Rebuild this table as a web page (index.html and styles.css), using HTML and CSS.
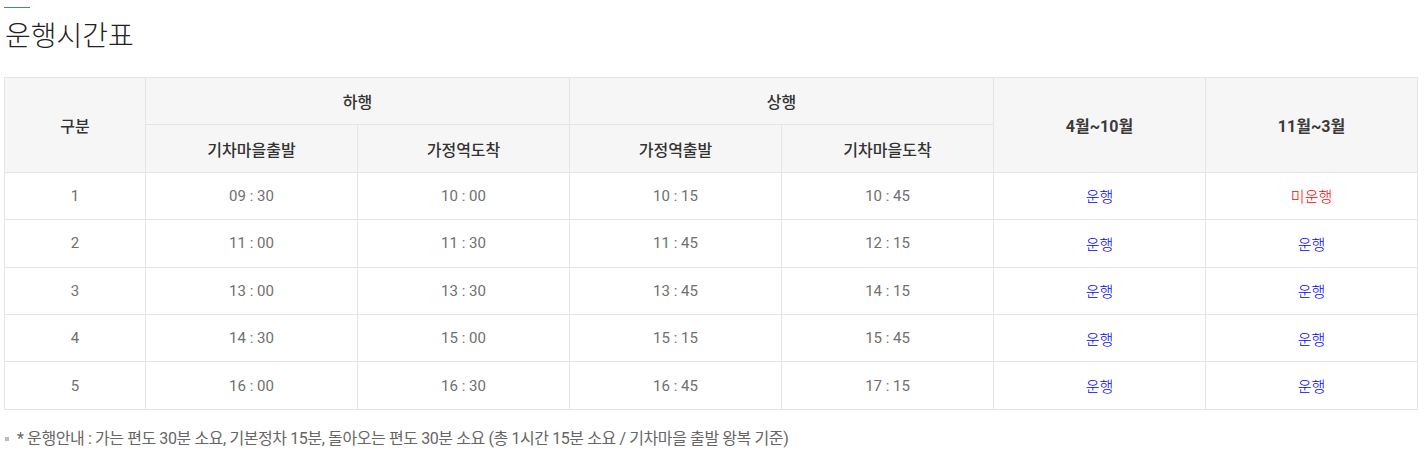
FILE: index.html
```html
<!DOCTYPE html>
<html lang="ko">
<head>
<meta charset="utf-8">
<link rel="stylesheet" href="styles.css">
</head>
<body>
<div class="page">
  <div class="title-bar"></div>
  <h2 class="title">운행시간표</h2>
  <table class="tbl">
    <colgroup>
      <col class="c0"><col class="c1"><col class="c1"><col class="c1"><col class="c1"><col class="c1"><col class="c1">
    </colgroup>
    <thead>
      <tr>
        <th rowspan="2">구분</th>
        <th colspan="2">하행</th>
        <th colspan="2">상행</th>
        <th rowspan="2" class="bold">4월~10월</th>
        <th rowspan="2" class="bold">11월~3월</th>
      </tr>
      <tr>
        <th>기차마을출발</th>
        <th>가정역도착</th>
        <th>가정역출발</th>
        <th>기차마을도착</th>
      </tr>
    </thead>
    <tbody>
      <tr><td>1</td><td>09 : 30</td><td>10 : 00</td><td>10 : 15</td><td>10 : 45</td><td class="on">운행</td><td class="off">미운행</td></tr>
      <tr><td>2</td><td>11 : 00</td><td>11 : 30</td><td>11 : 45</td><td>12 : 15</td><td class="on">운행</td><td class="on">운행</td></tr>
      <tr><td>3</td><td>13 : 00</td><td>13 : 30</td><td>13 : 45</td><td>14 : 15</td><td class="on">운행</td><td class="on">운행</td></tr>
      <tr><td>4</td><td>14 : 30</td><td>15 : 00</td><td>15 : 15</td><td>15 : 45</td><td class="on">운행</td><td class="on">운행</td></tr>
      <tr><td>5</td><td>16 : 00</td><td>16 : 30</td><td>16 : 45</td><td>17 : 15</td><td class="on">운행</td><td class="on">운행</td></tr>
    </tbody>
  </table>
  <ul class="notes">
    <li>* 운행안내 : 가는 편도 30분 소요, 기본정차 15분, 돌아오는 편도 30분 소요 (총 1시간 15분 소요 / 기차마을 출발 왕복 기준)</li>
  </ul>
</div>
</body>
</html>
```

FILE: styles.css
```css
html, body {
  margin: 0;
  padding: 0;
  background: #fff;
}
body {
  font-family: Roboto, "Noto Sans CJK KR", sans-serif;
  color: #666;
}
.page {
  padding: 7px 0 0 4px;
  width: 1413px;
}
.title-bar {
  width: 26px;
  height: 1px;
  background: #4a78d8;
}
.title {
  margin: 8px 0 0 1px;
  font-family: "Noto Sans CJK KR", sans-serif;
  font-weight: 300;
  font-size: 28px;
  line-height: 36px;
  color: #222;
  letter-spacing: 0;
}
.tbl {
  margin-top: 25px;
  width: 1413px;
  border-collapse: collapse;
  table-layout: fixed;
}
.c0 { width: 141px; }
.c1 { width: 212px; }
.tbl th, .tbl td {
  border: 1px solid #e5e5e5;
  text-align: center;
  vertical-align: middle;
  height: 46.4px;
  padding: 0;
}
.tbl th {
  background: #f6f6f6;
  color: #333;
  font-size: 16px;
  font-weight: 500;
}
.tbl th.bold {
  font-weight: 700;
  color: #3a3a3a;
}
.tbl td {
  font-size: 15px;
  color: #707070;
}
.tbl td.on { color: #0000ff; font-weight: 300; }
.tbl td.off { color: #ff0000; font-weight: 300; }
.notes {
  list-style: none;
  margin: 17px 0 0 0;
  padding: 0;
}
.notes li {
  position: relative;
  padding-left: 13px;
  font-size: 16px;
  line-height: 24px;
  color: #666;
  letter-spacing: -0.4px;
}
.notes li::before {
  content: "";
  position: absolute;
  left: 1px;
  top: 10px;
  width: 4px;
  height: 4px;
  background: #bbb;
}
```
